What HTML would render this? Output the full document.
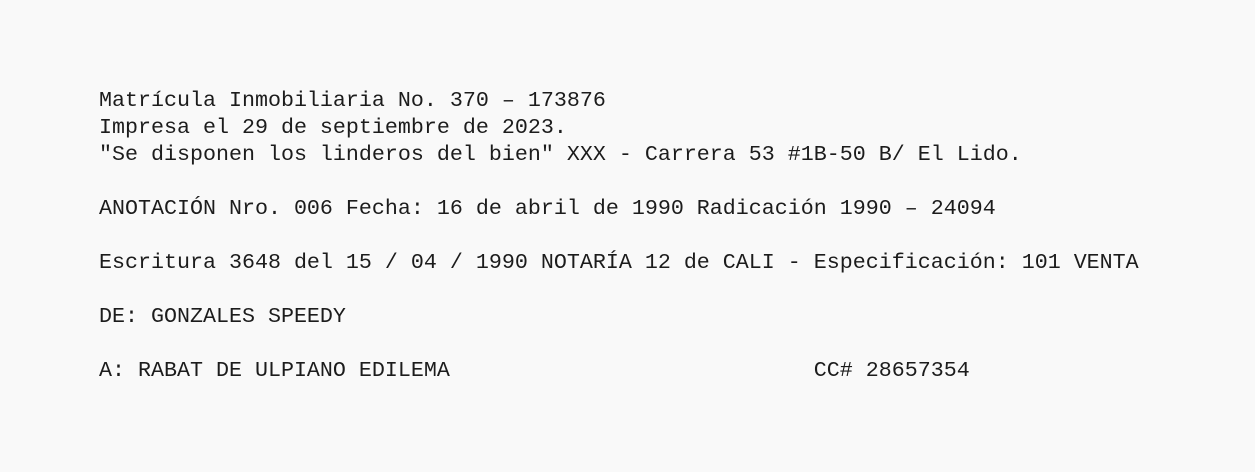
<!DOCTYPE html>
<html><head><meta charset="utf-8"><style>
html,body{margin:0;padding:0;background:#f9f9f9;width:1255px;height:472px;overflow:hidden}
pre{position:absolute;left:99px;top:87px;margin:0;font-family:"Liberation Mono","DejaVu Sans Mono",monospace;font-size:21.667px;line-height:27px;color:#1c1c1c}
</style></head><body>
<pre>Matrícula Inmobiliaria No. 370 – 173876
Impresa el 29 de septiembre de 2023.
"Se disponen los linderos del bien" XXX - Carrera 53 #1B-50 B/ El Lido.

ANOTACIÓN Nro. 006 Fecha: 16 de abril de 1990 Radicación 1990 – 24094

Escritura 3648 del 15 / 04 / 1990 NOTARÍA 12 de CALI - Especificación: 101 VENTA

DE: GONZALES SPEEDY

A: RABAT DE ULPIANO EDILEMA                            CC# 28657354</pre>
</body></html>
